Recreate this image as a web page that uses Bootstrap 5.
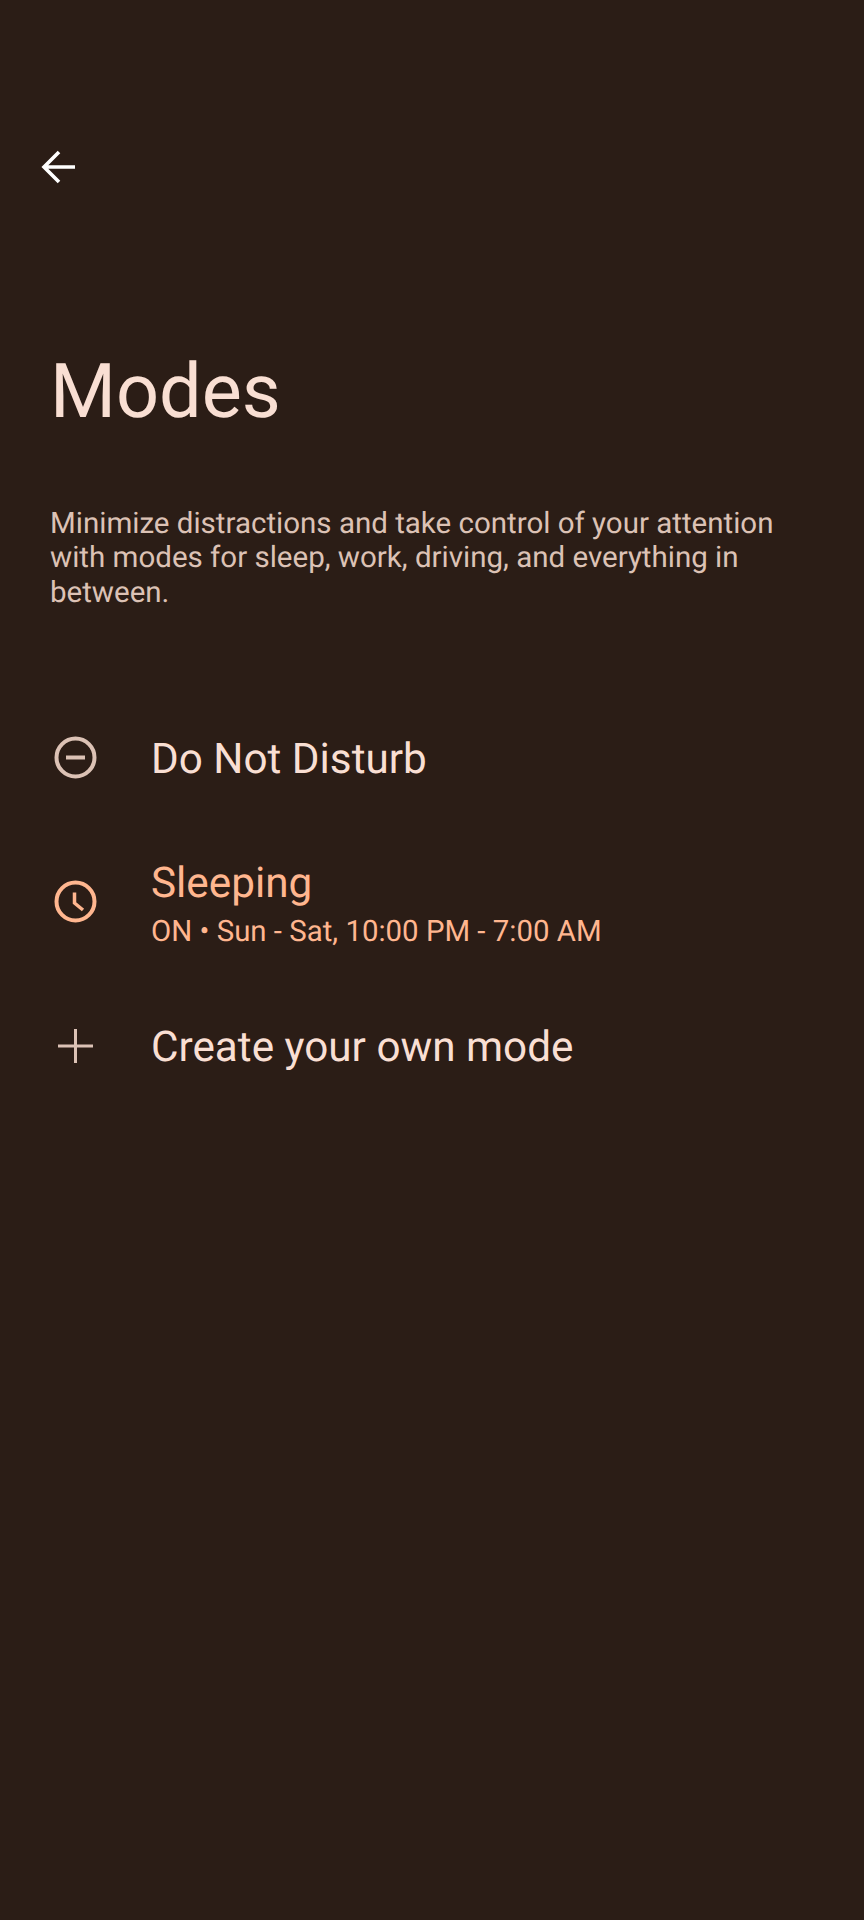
<!DOCTYPE html>
<html lang="en">
<head>
  <meta charset="UTF-8" />
  <meta name="viewport" content="width=device-width, initial-scale=1.0"/>
  <title>Modes</title>
  <link rel="stylesheet" href="https://cdn.jsdelivr.net/npm/bootstrap@5.3.0/dist/css/bootstrap.min.css"/>
  <style>
    body {
      background-color: #2b1d16;
      font-family: Roboto, "Noto Sans", sans-serif;
      text-rendering: geometricPrecision;
      min-height: 1920px;
    }
    .back-btn {
      padding: 150px 0 0 41px;
      height: 184px;
      color: #fff;
    }
    .page-title {
      margin: 163px 0 0 50px;
      font-size: 75.6px;
      line-height: 90px;
      font-weight: 400;
      color: #f9dfd3;
    }
    .page-intro {
      margin: 70px 40px 0 50px;
      font-size: 29.5px;
      line-height: 34.3px;
      color: #dcc2b5;
    }
    .mode-list {
      margin-top: 78px;
    }
    .mode-row {
      height: 144px;
      padding-left: 50px;
      background: transparent;
      border: 0;
      color: #f9dfd3;
    }
    .mode-icon {
      width: 50px;
      height: 50px;
      margin: 0 51px 4px 0;
      color: #dcc2b5;
    }
    .mode-name {
      font-size: 42.25px;
      line-height: 50px;
    }
    .mode-stack {
      padding-top: 3px;
    }
    .mode-detail {
      margin-top: 3px;
      font-size: 29.4px;
      line-height: 40px;
    }
    .mode-row.is-on,
    .mode-row.is-on .mode-icon {
      color: #ffb68f;
    }
  </style>
</head>
<body>
  <div class="back-btn">
    <svg width="34" height="34" viewBox="0 0 34 34" fill="none" stroke="currentColor" stroke-width="3.600" class="d-block">
      <path d="M34 17H3M18 2 3 17 18 32"/>
    </svg>
  </div>

  <h1 class="page-title">Modes</h1>
  <p class="page-intro">Minimize distractions and take control of your attention with modes for sleep, work, driving, and everything in between.</p>

  <div class="list-group list-group-flush mode-list">
    <div class="list-group-item mode-row d-flex align-items-center">
      <svg class="mode-icon flex-shrink-0" viewBox="0 0 50 50" fill="none" stroke="currentColor" stroke-width="4">
        <circle cx="25.500" cy="24.500" r="19"/>
        <path d="M16 24.500H35"/>
      </svg>
      <div class="mode-name">Do Not Disturb</div>
    </div>
    <div class="list-group-item mode-row is-on d-flex align-items-center">
      <svg class="mode-icon flex-shrink-0" viewBox="0 0 50 50" fill="none" stroke="currentColor" stroke-width="4">
        <circle cx="25.500" cy="24.500" r="19"/>
        <path d="M24.500 15.500V26L33 33" stroke-width="3.500"/>
      </svg>
      <div class="mode-stack">
        <div class="mode-name">Sleeping</div>
        <div class="mode-detail">ON • Sun - Sat, 10:00 PM - 7:00 AM</div>
      </div>
    </div>
    <div class="list-group-item mode-row d-flex align-items-center">
      <svg class="mode-icon flex-shrink-0" viewBox="0 0 50 50" fill="none" stroke="#dcc2b5" stroke-width="3">
        <path d="M25.500 8V42M8 25H43"/>
      </svg>
      <div class="mode-name">Create your own mode</div>
    </div>
  </div>

  <script src="https://cdn.jsdelivr.net/npm/bootstrap@5.3.0/dist/js/bootstrap.bundle.min.js"></script>
</body>
</html>
